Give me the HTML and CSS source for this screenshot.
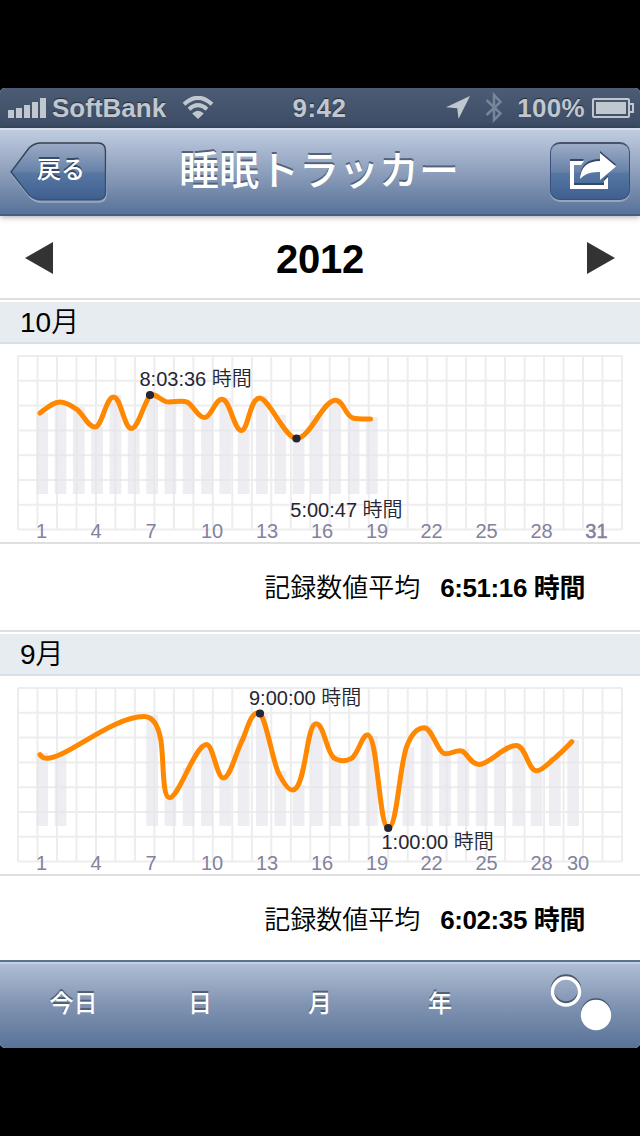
FILE: index.html
```html
<!DOCTYPE html>
<html lang="ja">
<head>
  <meta charset="UTF-8">
  <meta name="viewport" content="width=device-width, initial-scale=1.0">
  <title>睡眠トラッカー</title>
  <link rel="stylesheet" href="styles.css">
</head>
<body>

  <div class="screen">
    <!-- Status bar -->
    <div class="status-bar">
      <div class="status-left">
        <svg class="signal" width="40" height="22" viewBox="0 0 40 22">
          <path d="M0 13h6v8H0zM8 11h6v10H8zM16 8h6v13h-6zM24 5h6v16h-6zM32 1h6v20h-6z"/>
        </svg>
        <span class="carrier">SoftBank</span>
        <svg class="wifi" width="32" height="24" viewBox="0 0 32 24">
          <path class="arc" d="M2 8.2Q16-4.6 30 8.2M7 13.2Q16 5.2 25 13.2"/>
          <path d="M10.2 17.4Q16 12.2 21.8 17.4L16 23z"/>
        </svg>
      </div>
      <span class="clock">9:42</span>
      <div class="status-right">
        <svg class="location" width="24" height="24" viewBox="0 0 24 24">
          <path d="M24 0L12.5 23L11.3 12.3L0 11.3z"/>
        </svg>
        <svg class="bluetooth" width="18" height="32" viewBox="0 0 18 32">
          <path d="M1.500 8L15.500 21.500L9 28V3L15.500 10L1.500 23"/>
        </svg>
        <span class="percent">100%</span>
        <svg class="battery" width="42" height="20" viewBox="0 0 42 20">
          <rect class="case" x="1" y="1" width="36" height="18" rx="1"/>
          <rect x="4" y="4" width="30" height="12"/>
          <path class="case" d="M38 6h3v8h-3"/>
        </svg>
      </div>
    </div>

    <!-- Navigation bar -->
    <div class="nav-bar">
      <div class="back-button">
        <svg width="98" height="62" viewBox="0 0 98 62">
          <defs>
            <linearGradient id="backFill" x1="0" y1="0" x2="0" y2="1">
              <stop offset="0" stop-color="#9dacc6"/>
              <stop offset="0.5" stop-color="#6882a8"/>
              <stop offset="0.54" stop-color="#5676a3"/>
              <stop offset="1" stop-color="#3f608f"/>
            </linearGradient>
            <linearGradient id="backLine" x1="0" y1="0" x2="0" y2="1">
              <stop offset="0" stop-color="#34404f"/>
              <stop offset="1" stop-color="#38537b"/>
            </linearGradient>
          </defs>
          <path class="back-light" d="M1 31L19 7Q24 2 31 2H88Q96 2 96 10V52Q96 60 88 60H31Q24 60 19 54Z"/>
          <path class="back-shape" d="M1 30L19 6Q24 1 31 1H88Q95.500 1 95.500 9V50Q95.500 57.500 88 57.500H31Q24 57.500 19 53Z"/>
        </svg>
        <span class="back-text">戻る</span>
      </div>
      <h1 class="title">睡眠トラッカー</h1>
      <div class="share-button">
        <svg width="48" height="42" viewBox="0 0 48 42">
          <g class="share-shadow">
            <path d="M0 10H14L11 14H4V34H34V30L38 26V38H0Z"/>
            <path d="M30 2L46 15.500L30 29V21Q17 20 10 28Q11 10 30 10Z"/>
          </g>
          <g class="share-icon">
            <path d="M0 12H14L11 16H4V36H34V32L38 28V40H0Z"/>
            <path d="M30 4L46 17.500L30 31V23Q17 22 10 30Q11 12 30 12Z"/>
          </g>
        </svg>
      </div>
    </div>

    <!-- Year selector -->
    <div class="year-row">
      <svg width="28" height="32" viewBox="0 0 28 32"><path d="M0 16L28 0V32z"/></svg>
      <span class="year">2012</span>
      <svg width="28" height="32" viewBox="0 0 28 32"><path d="M28 16L0 0V32z"/></svg>
    </div>

    <!-- October -->
    <section class="month">
      <h2 class="month-name">10月</h2>
      <svg class="chart" width="640" height="198" viewBox="0 0 640 198">
        <defs>
          <path id="grid" d="M18 12H622M18 36.800H622M18 61.600H622M18 86.400H622M18 111.200H622M18 136H622M18 160.800H622M18 185.500H622M18 12V185.500M37.500 12V185.500M57 12V185.500M76.500 12V185.500M96 12V185.500M115.400 12V185.500M134.900 12V185.500M154.400 12V185.500M173.900 12V185.500M193.400 12V185.500M212.800 12V185.500M232.300 12V185.500M251.800 12V185.500M271.300 12V185.500M290.800 12V185.500M310.300 12V185.500M329.700 12V185.500M349.200 12V185.500M368.700 12V185.500M388.200 12V185.500M407.700 12V185.500M427.200 12V185.500M446.600 12V185.500M466.100 12V185.500M485.600 12V185.500M505.100 12V185.500M524.600 12V185.500M544.100 12V185.500M563.500 12V185.500M583 12V185.500M602.500 12V185.500M622 12V185.500"/>
        </defs>
        <use class="grid" href="#grid"/>
        <path class="bars" d="M42.200 150V69M60.500 150V58M78.800 150V63M97.100 150V83M115.400 150V51M133.700 150V84M152.100 150V51M170.400 150V58M188.700 150V57M207 150V73M225.300 150V54M243.600 150V86M261.900 150V52M280.200 150V71M298.500 150V94M316.900 150V71M335.200 150V57M353.500 150V72M371.800 150V73"/>
        <path class="line" d="M40 69C47 64 53 58 60 58C66 58 72 62 77 65.500C84 71 88 83 95 83C102 83 106 53 113.500 53C121 53 124 84.500 131.500 84.500C138 84.500 143 61 150 51.500C156 48 161 58 169 58C176 58 182 56 187 58C194 62 198 73.500 204.500 73.500C211 73.500 215 55.300 222 55.300C230 55.300 234 86.500 241.500 86.500C248 86.500 250 54 259.500 54C269 54 285 94.500 296.500 94.500C310 94.500 323 56.300 335.300 56.300C344 56.300 345 72 353 74C358 75.300 363 75 370.500 75"/>
        <circle class="dot" cx="150" cy="51" r="4.100"/>
        <circle class="dot" cx="296.500" cy="94.500" r="4.100"/>
        <text class="mark" x="139.500" y="41.700">8:03:36 時間</text>
        <text class="mark" x="290.300" y="172.700">5:00:47 時間</text>
        <g class="days">
          <text x="36" y="193.700">1</text>
          <text x="90.500" y="193.700">4</text>
          <text x="145.500" y="193.700">7</text>
          <text x="201" y="193.700">10</text>
          <text x="256" y="193.700">13</text>
          <text x="311" y="193.700">16</text>
          <text x="366" y="193.700">19</text>
          <text x="420.500" y="193.700">22</text>
          <text x="475.500" y="193.700">25</text>
          <text x="530.500" y="193.700">28</text>
          <text class="last-day" x="585.300" y="193.700">31</text>
        </g>
      </svg>
      <div class="average">
        <span>記録数値平均</span>
        <strong>6:51:16 時間</strong>
      </div>
    </section>

    <!-- September -->
    <section class="month">
      <h2 class="month-name">9月</h2>
      <svg class="chart" width="640" height="198" viewBox="0 0 640 198">
        <use class="grid" href="#grid"/>
        <path class="bars" d="M42.200 150V77M60.500 150V80M152.100 150V39M170.400 150V121M188.700 150V92M207 150V69M225.300 150V101M243.600 150V60M261.900 150V37M280.200 150V95M298.500 150V109M316.900 150V47M335.200 150V79M353.500 150V80M371.800 150V60M408.400 150V71M426.700 150V50M445 150V78M463.300 150V73M481.700 150V88M500 150V80M518.300 150V69M536.600 150V95M554.900 150V81M573.200 150V64"/>
        <path class="line" d="M40 78.700C43 82 44 82.500 48 82.300C68 81 113 40.500 144 40.500C154 40.500 158.500 50 161 65C164 85 162 121.700 169.500 121.700C179 121.700 195 68.500 206.500 68.500C213 68.500 217 102 223.300 102C230 102 235 79 241.500 66C247 55 250 36.500 259 36.500C266 41 272 83 278.500 97C283 106 288 114 292.500 114C306 114 306 47.700 316 47.700C324 47.700 326 75 334 82C339 85.500 347 85.500 352 82C359 76 362 59 367.500 59C378 59 379 152 388.300 152C397 152 399 93 406.500 71C411 59 417 52 424 51.800C432 51.800 437 75 444 77.500C450 79.500 456 73 462 75C468 78 471 88.500 479 88.500C489 88.500 504 69.500 516 69.500C526 69.500 528 94.800 536.500 94.800C543 94.800 549 86 555 82Q563 75 571.800 65.700"/>
        <circle class="dot" cx="260" cy="37.500" r="4.100"/>
        <circle class="dot" cx="388.200" cy="152" r="4.100"/>
        <text class="mark" x="249" y="28.700">9:00:00 時間</text>
        <text class="mark" x="381.500" y="172.700">1:00:00 時間</text>
        <g class="days">
          <text x="36" y="193.700">1</text>
          <text x="90.500" y="193.700">4</text>
          <text x="145.500" y="193.700">7</text>
          <text x="201" y="193.700">10</text>
          <text x="256" y="193.700">13</text>
          <text x="311" y="193.700">16</text>
          <text x="366" y="193.700">19</text>
          <text x="420.500" y="193.700">22</text>
          <text x="475.500" y="193.700">25</text>
          <text x="530.500" y="193.700">28</text>
          <text x="567" y="193.700">30</text>
        </g>
      </svg>
      <div class="average">
        <span>記録数値平均</span>
        <strong>6:02:35 時間</strong>
      </div>
    </section>

    <!-- Bottom toolbar -->
    <div class="toolbar">
      <span>今日</span>
      <span>日</span>
      <span>月</span>
      <span>年</span>
      <svg width="62" height="58" viewBox="0 0 62 58">
        <circle class="ring-shadow" cx="16" cy="15.500" r="13.500"/>
        <circle class="ring" cx="16" cy="17.500" r="13.500"/>
        <circle class="disc-shadow" cx="46" cy="39.500" r="15.200"/>
        <circle class="disc" cx="46" cy="41" r="15.200"/>
      </svg>
    </div>
  </div>

</body>
</html>
```
FILE: styles.css
```css
/* General Styles */
* {
  box-sizing: border-box;
}

body {
  margin: 0;
  padding: 88px 0;
  background-color: #000;
  font-family: "Liberation Sans", "Noto Sans CJK JP", sans-serif;
  color: #000;
}

svg {
  display: block;
}

.screen {
  width: 640px;
  height: 960px;
  background-color: #fff;
  border-radius: 5px;
  overflow: hidden;
}

/* Status Bar */
.status-bar {
  display: grid;
  grid-template-columns: 1fr auto 1fr;
  align-items: center;
  height: 40px;
  padding: 0 6px 0 8px;
  background: linear-gradient(#4c5c74, #3d4c66);
  color: #c0c7cf;
  fill: #c0c7cf;
  font-size: 26px;
  font-weight: bold;
  line-height: 40px;
  text-shadow: 0 -1px 1px rgba(0, 0, 0, 0.5);
}

.status-left, .status-right {
  display: flex;
  align-items: center;
}

.status-right {
  justify-content: flex-end;
}

.carrier {
  margin: 0 16px 0 4px;
}

.clock {
  padding-right: 3px;
  letter-spacing: 0.5px;
}

.wifi .arc {
  fill: none;
  stroke: #c0c7cf;
  stroke-width: 4;
}

.location {
  margin-right: 15px;
}

.bluetooth {
  margin-right: 14px;
  fill: none;
  stroke: #77859a;
  stroke-width: 2.5;
}

.percent {
  margin-right: 7px;
  letter-spacing: 0.3px;
}

.battery .case {
  fill: none;
  stroke: #c0c7cf;
  stroke-width: 2;
}

/* Navigation Bar */
.nav-bar {
  position: relative;
  z-index: 1;
  display: flex;
  justify-content: space-between;
  align-items: flex-start;
  height: 88px;
  padding: 12px 10px 0;
  background: linear-gradient(#c0cde0, #8d9fbb 50%, #587299);
  border-top: 2px solid #d7dfea;
  border-bottom: 2px solid #415f8b;
  box-shadow: 0 1px 6px rgba(0, 0, 0, 0.35);
}

.back-button {
  display: grid;
  width: 98px;
}

.back-button > * {
  grid-area: 1 / 1;
}

.back-shape {
  fill: url(#backFill);
  stroke: url(#backLine);
  stroke-width: 1.5;
}

.back-light {
  fill: none;
  stroke: rgba(255, 255, 255, 0.35);
  stroke-width: 1.5;
}

.back-text {
  padding-left: 27px;
  color: #fff;
  font-size: 24px;
  font-weight: 500;
  line-height: 56px;
  text-shadow: 0 -2px 0 rgba(40, 55, 80, 0.8);
}

.title {
  margin: 0;
  padding-right: 20px;
  color: #fff;
  font-size: 40px;
  font-weight: 500;
  line-height: 58px;
  text-shadow: 0 -2px 0 #53627a;
}

.share-button {
  width: 80px;
  height: 58px;
  padding: 5px 0 0 19px;
  background: linear-gradient(#9dacc6, #6882a8 50%, #5676a3 54%, #3f608f);
  border: 1px solid #38507a;
  border-top: 2px solid #46536a;
  border-radius: 10px;
  box-shadow: 0 2px 0 rgba(255, 255, 255, 0.3);
}

.share-shadow {
  fill: #344866;
}

.share-icon {
  fill: #fff;
}

/* Year Selector */
.year-row {
  display: flex;
  justify-content: space-between;
  align-items: center;
  height: 84px;
  padding: 2px 25px 0;
  border-bottom: 2px solid #dedede;
  fill: #333;
}

.year {
  padding-top: 2px;
  font-size: 40px;
  font-weight: bold;
  letter-spacing: -0.3px;
  line-height: 80px;
}

/* Month Sections */
.month {
  padding-top: 2px;
}

.month-name {
  height: 42px;
  margin: 0;
  padding-left: 20px;
  background-color: #e7ecf0;
  border-bottom: 2px solid #d8e0e7;
  font-size: 28px;
  font-weight: 350;
  line-height: 41px;
}

.chart {
  font-size: 20px;
  font-weight: 350;
}

.grid {
  fill: none;
  stroke: #ededed;
  stroke-width: 2;
}

.bars {
  stroke: #e5e4eb;
  stroke-opacity: 0.65;
  stroke-width: 11.8;
}

.line {
  fill: none;
  stroke: #ff8800;
  stroke-width: 5;
  stroke-linecap: round;
  stroke-linejoin: round;
}

.dot, .mark {
  fill: #262632;
}

.days {
  fill: #83829e;
}

.last-day {
  stroke: #83829e;
  stroke-width: 0.5;
}

.average {
  display: flex;
  justify-content: flex-end;
  gap: 20px;
  height: 90px;
  padding-right: 55px;
  border-top: 2px solid #dfdfdf;
  border-bottom: 2px solid #dfdfdf;
  font-size: 26px;
  font-weight: 350;
  line-height: 88px;
}

.average strong {
  font-weight: bold;
  letter-spacing: -0.4px;
}

/* Bottom Toolbar */
.toolbar {
  position: relative;
  display: grid;
  grid-template-columns: 147px 106px 134px 106px 147px;
  height: 88px;
  margin-top: -4px;
  background: linear-gradient(#b2c0d7, #8497b4 45%, #587299);
  border-top: 2px solid #5b7290;
  box-shadow: inset 0 2px 0 #c3cfdf;
  color: #fff;
  font-size: 24px;
  font-weight: 500;
  line-height: 84px;
  text-align: center;
  text-shadow: 0 -2px 0 #4f6079;
}

.toolbar svg {
  margin: 12px 0 0 57px;
}

.ring, .ring-shadow {
  fill: none;
  stroke: #fff;
  stroke-width: 3.5;
}

.ring-shadow {
  stroke: #4b5a72;
}

.disc {
  fill: #fff;
}

.disc-shadow {
  fill: #43536d;
}
```
